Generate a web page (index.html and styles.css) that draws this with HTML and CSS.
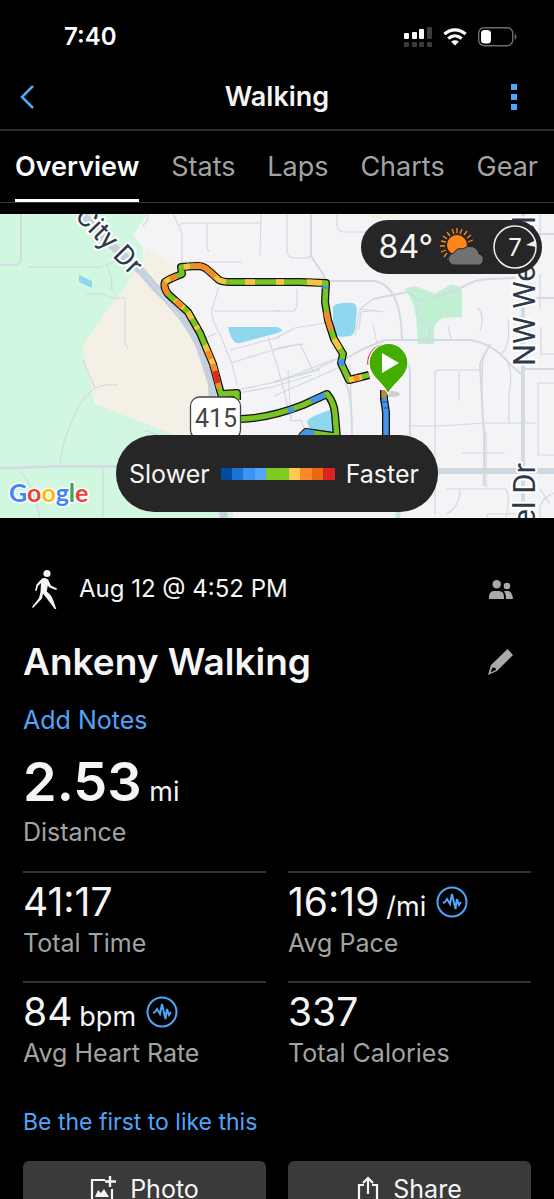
FILE: index.html
```html
<!DOCTYPE html>
<html lang="en">
<head>
    <title>Walking</title>
    <meta charset="utf-8">
    <meta name="viewport" content="width=device-width, initial-scale=1">
    <link rel="stylesheet" href="styles.css">
</head>
<body>
    <div class="status-bar">
        <span class="time">7:40</span>
        <div class="status-icons">
            <svg width="28" height="20" viewBox="0 0 28 20">
                <g fill="#fff">
                    <rect x="0" y="6" width="5" height="6" rx="1"/>
                    <rect x="8" y="5" width="5" height="7" rx="1"/>
                    <rect x="15" y="2" width="5" height="10" rx="1"/>
                </g>
                <g fill="#3c3c3c">
                    <rect x="23" y="0" width="5" height="12" rx="1"/>
                    <rect x="0" y="15" width="5" height="5" rx="1"/>
                    <rect x="8" y="15" width="5" height="5" rx="1"/>
                    <rect x="15" y="15" width="5" height="5" rx="1"/>
                    <rect x="23" y="15" width="5" height="5" rx="1"/>
                </g>
            </svg>
            <svg width="24" height="18" viewBox="0 0 24 18">
                <g fill="none" stroke="#fff" stroke-width="3.2">
                    <path d="M1.4 6.2C7.5.3 16.5.3 22.6 6.2"/>
                    <path d="M5.3 10.6c4-3.7 9.4-3.7 13.4 0"/>
                </g>
                <path d="M8.2 13.7c2.3-1.9 5.3-1.9 7.6 0L12 17.6z" fill="#fff"/>
            </svg>
            <svg width="39" height="20" viewBox="0 0 39 20">
                <rect x=".7" y=".7" width="34" height="18" rx="5.5" fill="none" stroke="#6d6d6d" stroke-width="1.4"/>
                <rect x="3" y="3" width="10" height="13.5" rx="3.5" fill="#fff"/>
                <path d="M36.7 6.8c2.3.9 2.3 5 0 5.9z" fill="#6d6d6d"/>
            </svg>
        </div>
    </div>

    <header class="header">
        <button class="icon-button" aria-label="Back">
            <svg width="14" height="24" viewBox="0 0 14 24"><path d="M13 1 2 12l11 11" fill="none" stroke="#4fa5f9" stroke-width="2.6"/></svg>
        </button>
        <h1>Walking</h1>
        <button class="icon-button more" aria-label="More">
            <svg width="6" height="26" viewBox="0 0 6 26"><path d="M0 0h6v6H0zM0 10h6v6H0zM0 20h6v6H0z" fill="#4fa5f9"/></svg>
        </button>
    </header>

    <nav class="tabs">
        <a href="#" class="tab active">Overview</a>
        <a href="#" class="tab">Stats</a>
        <a href="#" class="tab">Laps</a>
        <a href="#" class="tab">Charts</a>
        <a href="#" class="tab">Gear</a>
    </nav>

    <section class="map">
        <svg class="map-canvas" viewBox="0 0 554 304">
            <rect width="554" height="304" fill="#f4f3f5"/>
            <!-- land areas -->
            <path d="M147 34 177 53 172 74 203 140 213 183 233 304H150L80 150 83 131 143 46z" fill="#f4f0e6"/>
            <path d="M0 0H147L133 21 143 34V46L122 76 83 131 85 146 95 190 170 219 233 240V304H0z" fill="#d1f7e1"/>
            <path d="M364 0h35v5h-25z" fill="#f4f0e6"/>
            <path d="M405 75q8-5 18 0l12 5 15-9q6-2 12 6v26l-19 1q-9 4-9 14v12h-16l-2-28q-2-15-11-27z" fill="#c1efd2"/>
            <!-- water -->
            <path d="M79 61 92 67V74L79 68z" fill="#8fd7ee"/>
            <path d="M228 113H277Q288 117 274 120L240 129Q232 131 228 113z" fill="#8fd7ee"/>
            <path d="M333 93Q336 88 353 89 359 91 356 104 356 121 350 122L341 123Q334 121 333 114z" fill="#8fd7ee"/>
            <path d="M307 208Q308 203 330 196L337 220H312z" fill="#8fd7ee"/>
            <!-- small roads -->
            <g fill="none" stroke="#d0d8e1" stroke-width="1.1">
                <path d="M28 53H100L112 49 127 39M107 51Q112 60 112 77M86 80H103L111 84H125V130L128 134M143 12Q150 4 147 0M83 146 95 174M118 171H105Q85 174 73 205 61 230 60 252M0 255 60 253H118M20 257Q33 270 40 304M103 253V304M145 217Q157 219 165 226"/>
                <path d="M207 9V34L209 38M181 48H242M261 0 260 42M214 97H280M173 0Q181 16 182 20V53M178 12Q183 8 188 9H261M219 73 212 95Q211 106 220 120L232 150 237 171M198 127 217 119M230 136 280 123M231 149 282 133 305 130M237 176 276 168 335 145M235 175 238 179 272 173 312 161M268 123 278 154 291 205"/>
                <path d="M287 0V34Q287 44 294 44H306L311 42M337 0V12Q338 18 345 18H394M274 97H293Q297 95 297 90V75M274 136 300 130 313 157 347 140M274 125 295 114 325 109M355 122 360 95 385 98M360 95 373 85M373 110 377 130M359 116 361 98 377 96M407 78 420 87 416 100 430 116 428 130M420 87 436 83M448 112 451 124M478 94Q485 101 480 117M508 105Q511 135 500 140M540 0V32M540 60V95M541 113V140H554"/>
                <path d="M274 182 345 151M350 150 352 221M408 212H440L485 209H536M435 300V157L439 156H483M459 157V187M483 140Q480 210 486 220V273M508 150Q513 160 509 180V209M554 169H538V241H554M462 239H505M446 275H505Q511 280 506 304M460 275Q460 294 446 300M540 275 550 290M487 304V300H519M541 304Q536 286 554 279M288 156 291 207 301 206 305 216"/>
            </g>
            <!-- bigger roads -->
            <g fill="none" stroke="#d3dae2" stroke-width="2">
                <path d="M0 51H16Q21 50 21 43V0M311 0V42L323 60 326 67H375Q401 72 402 125M345 145 363 135 385 126H470Q492 129 509 149M373 85 408 78M436 83 465 72Q475 65 490 65L515 64M274 168 320 155M346 170Q352 180 352 222M521 155H554M535 84H554M537 20H554M0 254 60 252H120M406 148Q410 150 410 160V222M490 130 480 150 484 222V272M509 149 521 160"/>
            </g>
            <path d="M437 257H554" stroke="#d0d8df" stroke-width="6"/>
            <path d="M523 0V304" stroke="#d3dae2" stroke-width="4"/>
            <path d="M398 295V304" stroke="#c3e8da" stroke-width="5"/>
            <path d="M83 0Q96 18 115 34L142 58 155 73Q187 103 200 133L212 170 215 240 224 304" fill="none" stroke="#c6d0dc" stroke-width="8"/>
            <path d="M145 61 158 76 180 103" fill="none" stroke="#dbe1e9" stroke-width="1"/>
            <!-- street names -->
            <g class="street">
                <text transform="translate(74 3) rotate(46)" font-size="28">City Dr</text>
                <text transform="translate(535 152) rotate(-90)" font-size="31">NW Weigel</text>
                <text transform="translate(535 249) rotate(-90)" font-size="31" text-anchor="end">el Dr</text>
            </g>
            <!-- recorded track -->
            <g fill="none" stroke-linejoin="round">
                <g stroke="#111" stroke-width="8">
                    <path id="loop" d="M237 186V179L221 180 213 150 200 119 188 98 168 80Q163 73 165 68 169 65 182 60L181 53 198 52Q204 52 209 57L219 66Q222 68 230 68H300L326 69 325 88 328 106 334 125 343 140 341 149 349 166 369 161"/>
                    <path d="M241 205Q270 204 303 191L327 180Q334 188 335 200L337 224M301 223 306 218 334 222"/>
                    <path d="M384 176V185L386 198V224"/>
                </g>
                <g stroke="#78c422" stroke-width="5.4">
                    <path d="M237 186V179L221 180 213 150 200 119 188 98 168 80Q163 73 165 68 169 65 182 60L181 53 198 52Q204 52 209 57L219 66Q222 68 230 68H300L326 69 325 88 328 106 334 125 343 140 341 149 349 166 369 161"/>
                    <path d="M241 205Q270 204 303 191L327 180Q334 188 335 200L337 224M301 223 306 218 334 222"/>
                </g>
                <g stroke="#f9c33f" stroke-width="5.4">
                    <path d="M245 68H255M307 68 322 69M213 150 205 131M192 105 188 98M184 94 175 86M165 68Q168 65 175 63M184 53 190 52M204 53 209 57 219 66 226 68M334 125 340 135M349 166 362 163M276 68H284M198 115 196 112M216 160 213 150"/>
                </g>
                <g stroke="#f58a2b" stroke-width="5.4">
                    <path d="M182 93 176 87M168 80Q163 73 165 69M170 65 177 62M191 52H198Q204 52 209 57L215 63M326 98 328 106 331 116M213 150 219 174M354 165 359 163M211 145 208 137"/>
                </g>
                <path d="M215 157 218 169" stroke="#dc2a1c" stroke-width="5.4"/>
                <path d="M384 176V184" stroke="#b98d35" stroke-width="5.4"/>
                <path d="M384 184 386 198V224M311 187 325 181M288 197 294 195M301 223 306 218 314 219M325 72V75M341 145 342 152" stroke="#4595ee" stroke-width="5.4"/>
                <path d="M382 188H389M384 194H388" stroke="#194e7b"/>
            </g>
            <!-- start pin -->
            <ellipse cx="392" cy="180" rx="8" ry="3" fill="#999" opacity=".4"/>
            <circle cx="385" cy="149" r="18" fill="#fff"/>
            <path d="M368 151A18 18 0 0 1 382 131" fill="none" stroke="#dc334d" stroke-width="1.3"/>
            <path d="M388 180C383 168 369 163 369 149a19.5 19.5 0 0 1 39 0c0 14-14 19-20 31z" fill="#43ad00" stroke="#fff" stroke-width="1.2"/>
            <path d="M382 139v20l17-10z" fill="#fff"/>
            <!-- highway shield -->
            <rect x="190.5" y="183" width="50" height="42" rx="9" fill="#fff" stroke="#444" stroke-width="1.3"/>
            <text class="shield" x="216" y="213" text-anchor="middle">415</text>
            <text class="google" x="9" y="288"><tspan fill="#4285f4">G</tspan><tspan fill="#ea4335">o</tspan><tspan fill="#fbbc05">o</tspan><tspan fill="#4285f4">g</tspan><tspan fill="#34a853">l</tspan><tspan fill="#ea4335">e</tspan></text>
        </svg>
        <div class="weather">
            <span>84°</span>
            <svg width="46" height="40" viewBox="0 0 46 40">
                <g stroke="#ff8a1c" stroke-width="1.3">
                    <path d="M17 1v5M12 2l2 5M7 5l3 4M3 9l4 3M1 14l5 1M0 19h5M1 25l5-2M4 30l3-4M8 33l2-4M22 2l-2 5M27 4l-3 4M31 8l-4 3M33 13l-5 2"/>
                </g>
                <circle cx="17" cy="18" r="10" fill="#ff8419"/>
                <path d="M15 38a6 6 0 0 1-1-12 7 7 0 0 1 9-4 9.5 9.5 0 0 1 16 5 5.7 5.7 0 0 1 0 11z" fill="#727272" stroke="#262626" stroke-width="1"/>
            </svg>
            <svg width="44" height="44" viewBox="0 0 44 44">
                <circle cx="22" cy="22" r="21" fill="none" stroke="#eee" stroke-width="1.5"/>
                <path d="M33 20 43 15V22z" fill="#eee"/>
                <text class="wind" x="22" y="31" text-anchor="middle">7</text>
            </svg>
        </div>
        <div class="legend">
            <span>Slower</span>
            <div class="scale">
                <i class="s1"></i><i class="s2"></i><i class="s3"></i><i class="s4"></i><i class="s5"></i><i class="s5"></i><i class="s6"></i><i class="s7"></i><i class="s8"></i><i class="s9"></i>
            </div>
            <span>Faster</span>
        </div>
    </section>

    <main class="content">
        <div class="row">
            <svg class="walker" width="42" height="40" viewBox="0 0 42 40">
                <circle cx="24" cy="4.5" r="3.6" fill="#f5f5f5"/>
                <path d="M19 9.500q4-1.500 6 1l3 6 6 3-.7 1.500-7-2.500-1.500-2-1 6q5 4 6.500 9l3 8.500h-1.500L25 31l-5-6.500-1 5-9 9.500-1-1 7-9 1.500-6 .5-9-3 3-1.500 5-1.500-.5 1.500-6z" fill="#f5f5f5"/>
            </svg>
            <span class="date">Aug 12 @ 4:52 PM</span>
            <svg class="right" width="24" height="19" viewBox="0 0 24 19">
                <g fill="#aaa">
                    <circle cx="7.7" cy="4.2" r="4.2"/>
                    <circle cx="18" cy="6" r="3.3"/>
                    <path d="M0 19v-3q1-5 5-5h5q5 0 5 6v2zM15 11h4q4 0 5 8h-7q0-5-2-8z"/>
                </g>
            </svg>
        </div>
        <div class="row title-row">
            <h2>Ankeny Walking</h2>
            <button class="icon-button right" aria-label="Edit">
                <svg width="25" height="26" viewBox="0 0 25 26">
                    <path d="M19.500 0 25 6 9 22 0 26 3 16z" fill="#aaa"/>
                    <path d="M4.500 18.500 2.500 23.500l5.500-2.500-.5-2z" fill="#000"/>
                </svg>
            </button>
        </div>
        <a href="#" class="notes">Add Notes</a>
        <div class="distance"><b>2.53</b> mi</div>
        <div class="label">Distance</div>

        <div class="stats">
            <div class="stat">
                <div class="value"><span>41:17</span></div>
                <div class="label">Total Time</div>
            </div>
            <div class="stat">
                <div class="value"><span>16:19</span><small>/mi</small>
                    <svg class="pulse" width="32" height="32" viewBox="0 0 32 32"><circle cx="16" cy="16" r="14.5"/><path d="m7 17 2-1 2-3 3 5 2-10 3.500 15L21 13l2 6 2-3"/></svg>
                </div>
                <div class="label">Avg Pace</div>
            </div>
            <div class="stat">
                <div class="value"><span>84</span><small>bpm</small>
                    <svg class="pulse" width="32" height="32" viewBox="0 0 32 32"><circle cx="16" cy="16" r="14.5"/><path d="m7 17 2-1 2-3 3 5 2-10 3.500 15L21 13l2 6 2-3"/></svg>
                </div>
                <div class="label">Avg Heart Rate</div>
            </div>
            <div class="stat">
                <div class="value"><span>337</span></div>
                <div class="label">Total Calories</div>
            </div>
        </div>

        <a href="#" class="like">Be the first to like this</a>
        <div class="actions">
            <button class="action">
                <svg width="26" height="26" viewBox="0 0 26 26">
                    <path d="M15 4H2v20h20V13" fill="none" stroke="#f5f5f5" stroke-width="2.2"/>
                    <path d="M20 0v11M15 5.500h11" stroke="#f5f5f5" stroke-width="2.4"/>
                    <path d="m5 21 3-7 3 3 3-4 5 8z" fill="#f5f5f5"/>
                </svg>
                Photo
            </button>
            <button class="action">
                <svg width="22" height="26" viewBox="0 0 22 26">
                    <path d="M7 9H2v15h18V9h-5M11 18V3M6 7l5-5 5 5" fill="none" stroke="#f5f5f5" stroke-width="2.2"/>
                </svg>
                Share
            </button>
        </div>
    </main>
</body>
</html>
```

FILE: styles.css
```css
* {
    box-sizing: border-box;
}
body {
    margin: 0;
    height: 100vh;
    overflow: hidden;
    background-color: #000;
    color: #f5f5f5;
    font-family: Inter, "Liberation Sans", sans-serif;
    font-size: 25px;
    line-height: 32px;
}
a {
    color: #4fa5f9;
    text-decoration: none;
}
button {
    border: none;
    padding: 0;
    background: none;
    color: inherit;
    font: inherit;
    cursor: pointer;
}
svg {
    display: block;
    flex-shrink: 0;
}
.status-bar {
    display: flex;
    align-items: center;
    justify-content: space-between;
    height: 64px;
    padding: 10px 37px 0 64px;
}
.time {
    font-size: 24px;
    font-weight: 600;
    color: #fff;
}
.status-icons {
    display: flex;
    align-items: center;
    gap: 11px;
}
.header {
    display: grid;
    grid-template-columns: 1fr auto 1fr;
    align-items: center;
    height: 67px;
    padding: 0 20px;
    border-bottom: 2px solid #2b2b2b;
}
.more {
    justify-self: end;
    margin-right: 17px;
}
h1 {
    margin: 0;
    font-size: 27px;
    font-weight: 600;
}
.tabs {
    display: flex;
    justify-content: space-between;
    height: 72px;
    padding: 0 16px 0 15px;
    border-bottom: 1px solid #3a3a3a;
    font-size: 27px;
}
.tab {
    padding-top: 20px;
    color: #a3a3a3;
    border-bottom: 3px solid transparent;
}
.tab.active {
    color: #fff;
    font-weight: 600;
    border-color: #fff;
}
.map {
    position: relative;
    margin-top: 11px;
}
.map-canvas {
    width: 100%;
}
.street text {
    font-family: Roboto, sans-serif;
    fill: #2d3a4c;
    stroke: #fff;
    stroke-width: 4px;
    stroke-linejoin: round;
    paint-order: stroke;
}
.shield {
    font-family: Roboto, sans-serif;
    font-size: 25px;
    fill: #444;
}
.google {
    font-family: Lato, sans-serif;
    font-size: 25px;
    font-weight: bold;
    stroke: #fff;
    stroke-width: 3px;
    stroke-linejoin: round;
    paint-order: stroke;
}
.weather {
    position: absolute;
    top: 6px;
    right: 12px;
    display: flex;
    align-items: center;
    gap: 7px;
    padding: 5px 5px 5px 18px;
    border-radius: 27px;
    background-color: #262626;
    font-size: 32px;
}
.wind {
    font-size: 24px;
    fill: #f5f5f5;
}
.legend {
    position: absolute;
    bottom: 6px;
    left: 50%;
    transform: translateX(-50%);
    display: flex;
    align-items: center;
    gap: 11px;
    height: 77px;
    padding: 0 19px 0 13px;
    border-radius: 38px;
    background-color: #262626;
}
.scale {
    display: flex;
    width: 114px;
    height: 12px;
}
.scale i {
    flex: 1;
}
.s1 { background-color: #004a9f; }
.s2 { background-color: #1976d8; }
.s3 { background-color: #3c94f3; }
.s4 { background-color: #52a7fc; }
.s5 { background-color: #80cb22; }
.s6 { background-color: #fdc94e; }
.s7 { background-color: #fb882b; }
.s8 { background-color: #ec680f; }
.s9 { background-color: #dc2224; }
.content {
    padding: 51px 23px 0;
}
.row {
    display: flex;
    align-items: center;
    height: 40px;
}
.date {
    margin-left: 14px;
    font-size: 24px;
}
.right {
    margin-left: auto;
    margin-right: 18px;
}
.title-row {
    margin-top: 33px;
}
h2 {
    margin: 0;
    font-size: 37px;
    font-weight: 600;
}
.notes {
    display: block;
    margin-top: 22px;
}
.distance {
    margin-top: 22px;
    line-height: 48px;
    font-size: 27px;
}
.distance b {
    font-size: 54px;
    font-weight: 600;
}
.label {
    color: #a3a3a3;
}
.stats {
    display: grid;
    grid-template-columns: 1fr 1fr;
    column-gap: 22px;
    margin-top: 23px;
}
.stat {
    height: 110px;
    padding-top: 7px;
    border-top: 2px solid #333;
}
.value {
    display: flex;
    align-items: baseline;
    gap: 7px;
    height: 44px;
    margin-bottom: 3px;
    line-height: 44px;
    font-size: 39px;
}
.value small {
    font-size: 27px;
}
.pulse {
    align-self: center;
    margin-left: 3px;
    fill: none;
    stroke: #4fa5f9;
    stroke-width: 2;
}
.like {
    display: block;
    margin-top: 15px;
    font-size: 23px;
}
.actions {
    display: grid;
    grid-template-columns: 1fr 1fr;
    gap: 22px;
    margin-top: 23px;
}
.action {
    display: flex;
    align-items: center;
    justify-content: center;
    gap: 14px;
    height: 56px;
    border-radius: 6px;
    background-color: #3a3a3a;
}
```
